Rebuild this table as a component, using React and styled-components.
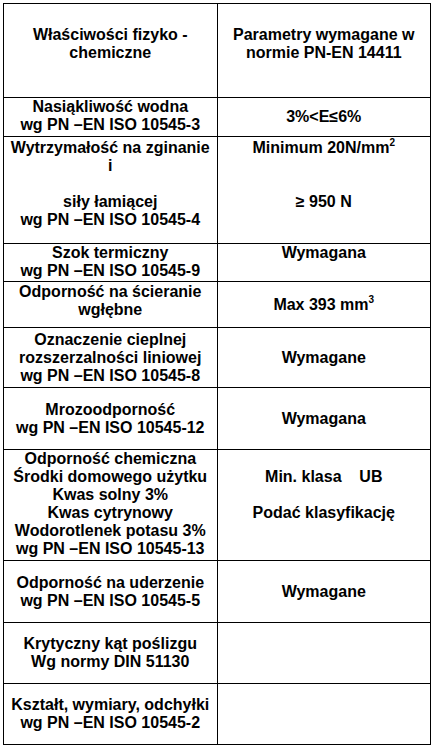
import React from "react";
import styled, { createGlobalStyle } from "styled-components";

const GlobalStyle = createGlobalStyle`
  html, body {
    margin: 0;
    padding: 0;
    background: #fff;
  }
`;

const Page = styled.div`
  padding: 3px 3px 0 3px;
  font-family: "Liberation Sans", Arial, sans-serif;
  font-weight: bold;
  font-size: 16px;
  color: #000;
`;

const Table = styled.table`
  width: 428px;
  border-collapse: collapse;
  table-layout: fixed;
`;

const Row = styled.tr`
  height: ${(p) => p.$h}px;
`;

const Cell = styled.td`
  width: 50%;
  border: 1px solid #000;
  text-align: center;
  vertical-align: ${(p) => p.$valign || "middle"};
  padding: ${(p) => p.$pad || "0 4px"};
  line-height: normal;
  box-sizing: border-box;
`;

const Sup = styled.span`
  font-size: 10px;
  position: relative;
  top: -7px;
  line-height: 0;
`;

const Gap = styled.span`
  white-space: pre;
`;

const rows = [
  {
    h: 94,
    pad: "22px 4px 0",
    lv: "top",
    rv: "top",
    left: <>Właściwości fizyko -<br />chemiczne</>,
    right: <>Parametry wymagane w<br />normie PN-EN 14411</>,
  },
  {
    h: 39,
    lv: "top",
    left: <>Nasiąkliwość wodna<br />wg PN –EN ISO 10545-3</>,
    right: <>3%&lt;E≤6%</>,
  },
  {
    h: 107,
    lv: "top",
    rv: "top",
    pad: "2px 4px 0",
    left: (
      <>
        Wytrzymałość na zginanie<br />i<br /><br />siły łamiącej<br />wg PN –EN ISO 10545-4
      </>
    ),
    right: (
      <>
        Minimum 20N/mm<Sup>2</Sup><br /><br /><br />≥ 950 N
      </>
    ),
  },
  {
    h: 38,
    lv: "top",
    rv: "top",
    pad: "0 4px",
    left: <>Szok termiczny<br />wg PN –EN ISO 10545-9</>,
    right: <>Wymagana</>,
  },
  {
    h: 46,
    lv: "top",
    pad: "1px 4px 0",
    left: <>Odporność na ścieranie<br />wgłębne</>,
    right: <>Max 393 mm<Sup>3</Sup></>,
  },
  {
    h: 60,
    left: <>Oznaczenie cieplnej<br />rozszerzalności liniowej<br />wg PN –EN ISO 10545-8</>,
    right: <>Wymagane</>,
  },
  {
    h: 62,
    left: <>Mrozoodporność<br />wg PN –EN ISO 10545-12</>,
    right: <>Wymagana</>,
  },
  {
    h: 111,
    lv: "top",
    rv: "top",
    pad: "0 4px",
    left: (
      <>
        Odporność chemiczna<br />Środki domowego użytku<br />Kwas solny 3%<br />Kwas cytrynowy
        <br />Wodorotlenek potasu 3%<br />wg PN –EN ISO 10545-13
      </>
    ),
    right: (
      <>
        <br />
        <Gap>Min. klasa    UB</Gap>
        <br />
        <br />
        Podać klasyfikację
      </>
    ),
  },
  {
    h: 62,
    left: <>Odporność na uderzenie<br />wg PN –EN ISO 10545-5</>,
    right: <>Wymagane</>,
  },
  {
    h: 61,
    left: <>Krytyczny kąt poślizgu<br />Wg normy DIN 51130</>,
    right: null,
  },
  {
    h: 61,
    left: <>Kształt, wymiary, odchyłki<br />wg PN –EN ISO 10545-2</>,
    right: null,
  },
];

export default function App() {
  return (
    <>
      <GlobalStyle />
      <Page>
        <Table>
          <tbody>
            {rows.map((r, i) => (
              <Row key={i} $h={r.h}>
                <Cell $valign={r.lv} $pad={r.pad}>
                  {r.left}
                </Cell>
                <Cell $valign={r.rv} $pad={r.pad}>
                  {r.right}
                </Cell>
              </Row>
            ))}
          </tbody>
        </Table>
      </Page>
    </>
  );
}
